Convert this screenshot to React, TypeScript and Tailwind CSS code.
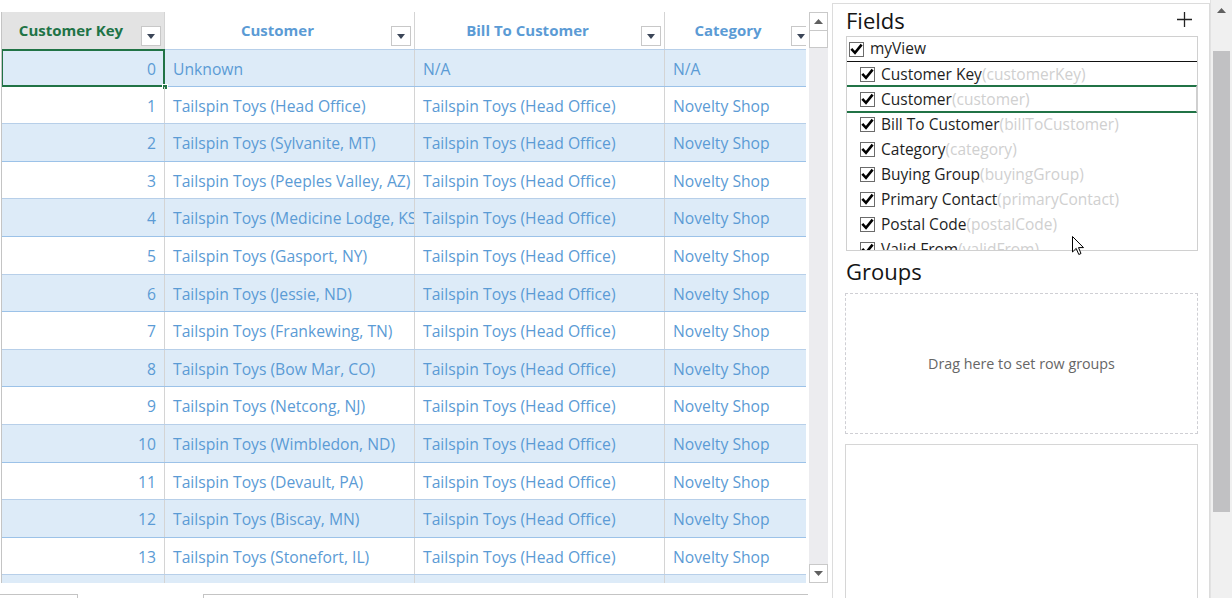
import React from "react";

const rows: [string, string, string, string][] = [
  ["0", "Unknown", "N/A", "N/A"],
  ["1", "Tailspin Toys (Head Office)", "Tailspin Toys (Head Office)", "Novelty Shop"],
  ["2", "Tailspin Toys (Sylvanite, MT)", "Tailspin Toys (Head Office)", "Novelty Shop"],
  ["3", "Tailspin Toys (Peeples Valley, AZ)", "Tailspin Toys (Head Office)", "Novelty Shop"],
  ["4", "Tailspin Toys (Medicine Lodge, KS)", "Tailspin Toys (Head Office)", "Novelty Shop"],
  ["5", "Tailspin Toys (Gasport, NY)", "Tailspin Toys (Head Office)", "Novelty Shop"],
  ["6", "Tailspin Toys (Jessie, ND)", "Tailspin Toys (Head Office)", "Novelty Shop"],
  ["7", "Tailspin Toys (Frankewing, TN)", "Tailspin Toys (Head Office)", "Novelty Shop"],
  ["8", "Tailspin Toys (Bow Mar, CO)", "Tailspin Toys (Head Office)", "Novelty Shop"],
  ["9", "Tailspin Toys (Netcong, NJ)", "Tailspin Toys (Head Office)", "Novelty Shop"],
  ["10", "Tailspin Toys (Wimbledon, ND)", "Tailspin Toys (Head Office)", "Novelty Shop"],
  ["11", "Tailspin Toys (Devault, PA)", "Tailspin Toys (Head Office)", "Novelty Shop"],
  ["12", "Tailspin Toys (Biscay, MN)", "Tailspin Toys (Head Office)", "Novelty Shop"],
  ["13", "Tailspin Toys (Stonefort, IL)", "Tailspin Toys (Head Office)", "Novelty Shop"],
  ["", "", "", ""],
];

const fields: [string, string][] = [
  ["Customer Key", "customerKey"],
  ["Customer", "customer"],
  ["Bill To Customer", "billToCustomer"],
  ["Category", "category"],
  ["Buying Group", "buyingGroup"],
  ["Primary Contact", "primaryContact"],
  ["Postal Code", "postalCode"],
  ["Valid From", "validFrom"],
];

function Tri() {
  return (
    <svg width="8" height="5" viewBox="0 0 8 5">
      <path d="M0 0 L8 0 L4 5 Z" fill="#3b4658" />
    </svg>
  );
}

function DropBtn() {
  return (
    <div className="absolute right-[3px] bottom-[3px] w-[20px] h-[20px] border border-[#c8c8c8] bg-white flex items-center justify-center">
      <Tri />
    </div>
  );
}

function Check() {
  return (
    <span className="w-[15px] h-[15px] border border-[#6b6b6b] bg-white flex items-center justify-center shrink-0">
      <svg width="13" height="13" viewBox="0 0 13 13">
        <path d="M2.2 6.8 L5 9.8 L10.8 2.6" stroke="#000" strokeWidth="2.6" fill="none" strokeLinecap="square" />
      </svg>
    </span>
  );
}

function Arrow({ up }: { up?: boolean }) {
  return (
    <svg width="9" height="5" viewBox="0 0 9 5">
      <path d={up ? "M0 5 L9 5 L4.5 0 Z" : "M0 0 L9 0 L4.5 5 Z"} fill="#606060" />
    </svg>
  );
}

export default function App() {
  const font = { fontFamily: '"Open Sans", "Noto Sans", sans-serif' };
  return (
    <div className="w-[1232px] h-[598px] overflow-hidden bg-white flex relative" style={font}>
      {/* Left grid area */}
      <div className="w-[832px] h-full flex flex-col">
        <div className="h-[12px] shrink-0" />
        <div className="flex h-[571px] shrink-0">
          <div className="w-[805px] h-full overflow-hidden border-l border-[#c4c4c4] ml-[1px] flex flex-col">
            {/* header */}
            <div className="flex h-[37px] shrink-0 text-[15px] font-bold text-[#5b9bd5]">
              <div className="relative w-[163px] shrink-0 bg-[#e3e3e3] border-r border-[#d4d4d4] flex items-center pr-[24px] pb-[1px]">
                <span className="w-full text-center text-[#217346] whitespace-nowrap">Customer Key</span>
                <DropBtn />
              </div>
              <div className="relative w-[250px] shrink-0 border-r border-[#d4d4d4] flex items-center pr-[24px] pb-[1px]">
                <span className="w-full text-center whitespace-nowrap">Customer</span>
                <DropBtn />
              </div>
              <div className="relative w-[250px] shrink-0 border-r border-[#d4d4d4] flex items-center pr-[24px] pb-[1px]">
                <span className="w-full text-center whitespace-nowrap">Bill To Customer</span>
                <DropBtn />
              </div>
              <div className="relative w-[164px] shrink-0 flex items-center pr-[38px] pb-[1px]">
                <span className="w-full text-center whitespace-nowrap">Category</span>
                <div className="absolute left-[126px] bottom-[3px] w-[20px] h-[20px] border border-[#c8c8c8] bg-white flex items-center justify-center">
                  <Tri />
                </div>
              </div>
            </div>
            {/* rows */}
            {rows.map((r, i) => {
              const shaded = i % 2 === 0;
              return (
                <div
                  key={i}
                  className={`flex h-[37.6px] shrink-0 text-[15.7px] text-[#5b9bd5] border-b ${
                    shaded ? "bg-[#ddebf8] border-[#9cc2e8]" : "bg-white border-[#b7cfe9]"
                  } ${i === 0 ? "border-t border-t-[#b7cfe9]" : ""}`}
                >
                  <div className="relative w-[163px] shrink-0 border-r border-[#d4d4d4] flex items-center justify-end pr-[8px] pt-[3px] whitespace-nowrap">
                    {r[0]}
                    {i === 0 && (
                      <>
                        <div className="absolute -left-[1px] -top-[1px] -right-[1px] -bottom-[1px] border-2 border-[#217346]" />
                        <div className="absolute -right-[4px] -bottom-[4px] w-[6px] h-[6px] bg-[#217346] border border-white" />
                      </>
                    )}
                  </div>
                  <div className="w-[250px] shrink-0 border-r border-[#d4d4d4] flex items-center pl-[8px] pt-[3px] overflow-hidden whitespace-nowrap">
                    {r[1]}
                  </div>
                  <div className="w-[250px] shrink-0 border-r border-[#d4d4d4] flex items-center pl-[8px] pt-[3px] overflow-hidden whitespace-nowrap">
                    {r[2]}
                  </div>
                  <div className="w-[160px] shrink-0 flex items-center pl-[8px] pt-[3px] overflow-hidden whitespace-nowrap">
                    {r[3]}
                  </div>
                </div>
              );
            })}
          </div>
          {/* grid scrollbar */}
          <div className="ml-[3px] w-[19px] h-full bg-[#ececef] flex flex-col">
            <div className="h-[19px] border border-[#c9c9c9] bg-white flex items-center justify-center shrink-0">
              <Arrow up />
            </div>
            <div className="h-[17px] border border-t-0 border-[#c9c9c9] bg-white shrink-0" />
            <div className="flex-1" />
            <div className="h-[19px] border border-[#c9c9c9] bg-white flex items-center justify-center shrink-0">
              <Arrow />
            </div>
          </div>
        </div>
        {/* bottom strip */}
        <div className="flex-1 flex items-end">
          <div className="w-[78px] h-[4px] border-t border-r border-[#c4c4c4]" />
          <div className="w-[125px]" />
          <div className="w-[605px] h-[4px] border-t border-l border-[#c4c4c4]" />
        </div>
      </div>

      {/* Right panel */}
      <div className="w-[378px] h-full pt-[3px] shrink-0">
        <div className="h-full border-l border-t border-r border-[#dcdcdc] pl-[13px] pr-[11px] flex flex-col">
          <div className="h-[32px] flex items-center justify-between shrink-0">
            <span className="text-[22px] text-[#141414] leading-none -mt-[1px]">Fields</span>
            <svg width="15" height="15" viewBox="0 0 15 15" className="mr-[6px] mt-[-2px]">
              <path d="M7.5 0 V15 M0 7.5 H15" stroke="#222" strokeWidth="1.3" />
            </svg>
          </div>
          <div className="h-[215px] border border-[#d0d0d0] overflow-hidden shrink-0 text-[15.5px] text-[#1e1e1e]">
            <div className="h-[25px] flex items-center pl-[2px] gap-[6px] border-b border-[#111]">
              <Check />
              <span>myView</span>
            </div>
            {fields.map(([label, key], i) => (
              <div key={label} className="relative h-[25px] flex items-center pl-[13px] gap-[6px]">
                <Check />
                <span className="whitespace-nowrap">
                  {label}
                  <span className="text-[#d0d0d0]">({key})</span>
                </span>
                {i === 1 && (
                  <div className="absolute left-0 right-0 top-[-2px] bottom-[-1px] border-y-2 border-[#217346] border-r border-r-[#cfcfcf]" />
                )}
              </div>
            ))}
          </div>
          <div className="h-[42px] flex items-center shrink-0">
            <span className="text-[22px] text-[#141414] leading-none -mt-[3px]">Groups</span>
          </div>
          <div className="h-[141px] border border-dashed border-[#cfcfd4] flex items-center justify-center shrink-0 -ml-[1px]">
            <span className="text-[14.3px] text-[#666]">Drag here to set row groups</span>
          </div>
          <div className="flex-1 border border-[#d6d6d6] mt-[10px] -ml-[1px] border-b-0" />
        </div>
      </div>

      {/* outer scrollbar */}
      <div className="w-[22px] h-full bg-[#f0f0f0] border-l border-[#e2e2e2] flex flex-col items-center shrink-0">
        <div className="h-[20px] flex items-center justify-center">
          <Arrow up />
        </div>
        <div className="h-[31px]" />
        <div className="w-[17px] h-[461px] bg-[#c1c1c3]" />
      </div>

      {/* mouse cursor */}
      <svg className="absolute left-[1072px] top-[236px]" width="13" height="20" viewBox="0 0 13 20">
        <path d="M0.5 0.5 L0.5 16 L4.2 12.4 L6.8 18.5 L9 17.5 L6.5 11.6 L11.5 11.6 Z" fill="#fff" stroke="#000" strokeWidth="1" strokeLinejoin="miter" />
      </svg>
    </div>
  );
}
